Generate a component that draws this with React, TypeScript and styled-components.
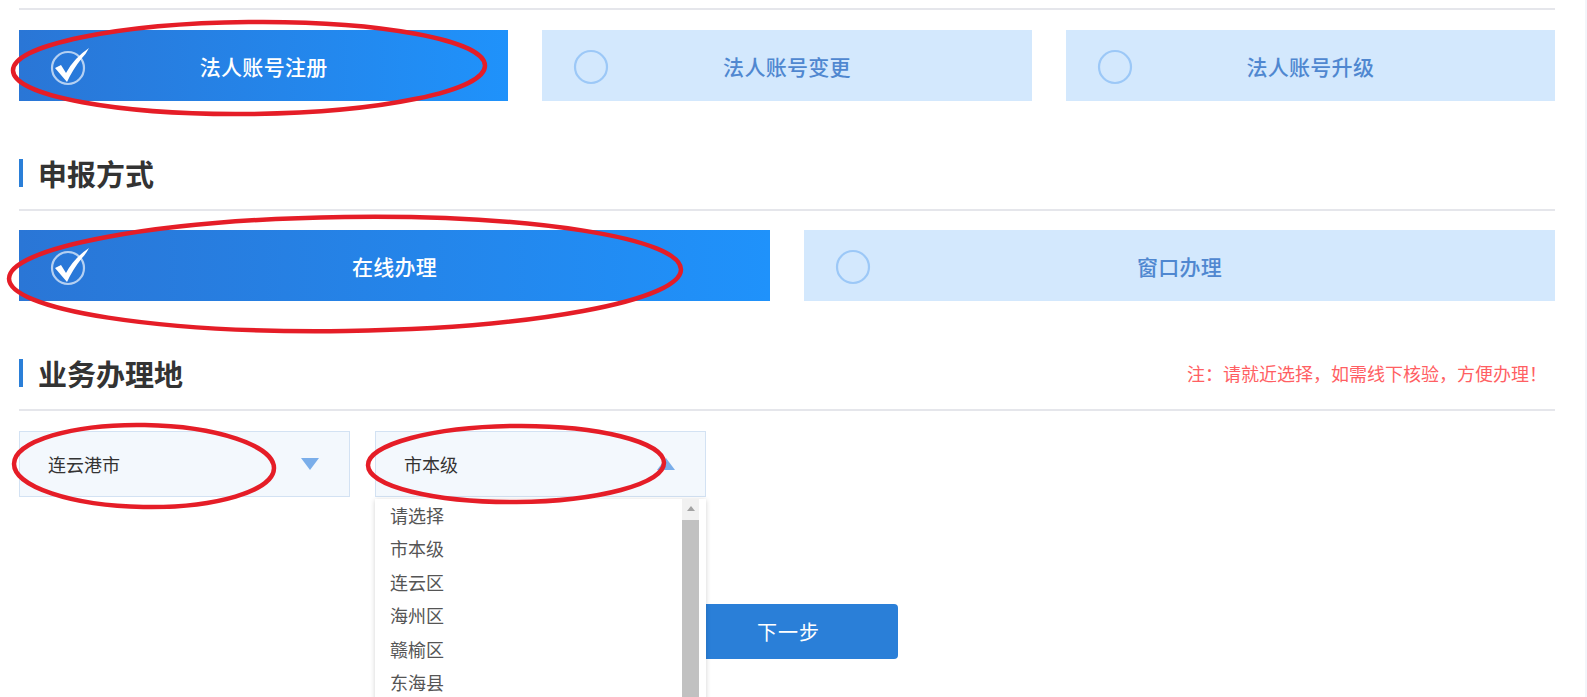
import React from "react";
import styled, { createGlobalStyle } from "styled-components";

const GlobalStyle = createGlobalStyle`
  html, body {
    margin: 0;
    padding: 0;
    background: #ffffff;
    overflow: hidden;
  }
  * {
    box-sizing: border-box;
  }
`;

const FONT = `"Noto Sans CJK SC", "Noto Sans", "Liberation Sans", sans-serif`;

const Page = styled.div`
  position: relative;
  width: 1587px;
  height: 697px;
  overflow: hidden;
  padding: 8px 30px 0 19px;
  font-family: ${FONT};
  border-right: 2px solid #f3f5fa;
`;

const Divider = styled.div<{ $top?: number }>`
  height: 2px;
  background: #e5e6eb;
  margin-top: ${(p) => p.$top ?? 0}px;
`;

const OptionRow = styled.div<{ $cols: number; $top: number }>`
  display: grid;
  grid-template-columns: repeat(${(p) => p.$cols}, 1fr);
  gap: 34px;
  margin-top: ${(p) => p.$top}px;
`;

const OptionCard = styled.div<{ $active?: boolean }>`
  position: relative;
  height: 71px;
  display: flex;
  align-items: center;
  justify-content: center;
  font-size: 21px;
  font-weight: 500;
  letter-spacing: 0.3px;
  color: ${(p) => (p.$active ? "#ffffff" : "#4f87d0")};
  background: ${(p) =>
    p.$active ? "linear-gradient(90deg, #2a76d6 0%, #1f92fb 100%)" : "#d3e8fd"};
`;

const Mark = styled.span`
  position: absolute;
  left: 30px;
  top: 50%;
  transform: translateY(-50%);
  display: flex;
`;

const SectionHead = styled.div<{ $top: number }>`
  display: flex;
  align-items: center;
  justify-content: space-between;
  height: 40px;
  margin-top: ${(p) => p.$top}px;
`;

const SectionTitle = styled.h2`
  display: flex;
  align-items: center;
  gap: 15px;
  margin: 0;
  font-size: 29px;
  font-weight: bold;
  color: #333333;
  &::before {
    content: "";
    width: 4px;
    height: 28px;
    background: #2a7fd8;
  }
`;

const Note = styled.span`
  font-size: 18px;
  color: #ff5f63;
  margin-right: 8px;
`;

const SelectRow = styled.div`
  display: flex;
  gap: 25px;
  margin-top: 20px;
`;

const SelectWrap = styled.div`
  position: relative;
`;

const SelectBox = styled.div`
  width: 331px;
  height: 66px;
  display: flex;
  align-items: center;
  justify-content: space-between;
  padding: 0 30px 0 28px;
  background: #f3f8fd;
  border: 1px solid #d3e2f3;
  font-size: 18px;
  color: #333333;
`;

const Arrow = styled.span<{ $up?: boolean }>`
  width: 0;
  height: 0;
  border-left: 9px solid transparent;
  border-right: 9px solid transparent;
  ${(p) =>
    p.$up
      ? "border-bottom: 12px solid #7aaeea;"
      : "border-top: 12px solid #7aaeea;"}
`;

const DropList = styled.ul`
  position: absolute;
  left: 0;
  top: 68px;
  width: 331px;
  height: 205px;
  margin: 0;
  padding: 0;
  list-style: none;
  background: #ffffff;
  box-shadow: 0 1px 5px rgba(0, 0, 0, 0.18);
  z-index: 5;
  overflow: hidden;
`;

const DropItem = styled.li`
  height: 33.4px;
  line-height: 33px;
  padding-left: 15px;
  font-size: 18px;
  color: #555555;
`;

const ScrollTrack = styled.div`
  position: absolute;
  right: 7px;
  top: 0;
  bottom: 0;
  width: 17px;
  background: #f1f1f1;
  display: flex;
  flex-direction: column;
  align-items: center;
  &::before {
    content: "";
    margin-top: 7px;
    border-left: 4px solid transparent;
    border-right: 4px solid transparent;
    border-bottom: 5px solid #a3a3a3;
  }
  &::after {
    content: "";
    margin-top: 9px;
    width: 17px;
    flex: 1;
    background: #c1c1c1;
  }
`;

const ButtonRow = styled.div`
  margin-top: 107px;
  padding-left: 660px;
`;

const NextButton = styled.button`
  width: 219px;
  height: 55px;
  border: none;
  border-radius: 4px;
  background: #2a7fd8;
  color: #ffffff;
  font-family: ${FONT};
  font-size: 20px;
  letter-spacing: 1px;
  cursor: pointer;
`;

const Annotations = styled.svg`
  position: absolute;
  left: 0;
  top: 0;
  width: 1587px;
  height: 697px;
  pointer-events: none;
  z-index: 10;
`;

const CheckIcon = () => (
  <svg width="46" height="44" viewBox="0 0 46 44">
    <circle cx="19" cy="24" r="16" fill="none" stroke="rgba(255,255,255,0.65)" strokeWidth="2.2" />
    <path
      d="M6 24 L12 21 L17 29 Q25 14 40 4 Q37 10 33 14 Q24 25 18 38 Z"
      fill="#ffffff"
    />
  </svg>
);

const RingIcon = () => (
  <svg width="46" height="44" viewBox="0 0 46 44">
    <circle cx="19" cy="23" r="16" fill="none" stroke="#9cc8f7" strokeWidth="2.2" />
  </svg>
);

const types = [
  { label: "法人账号注册", active: true },
  { label: "法人账号变更", active: false },
  { label: "法人账号升级", active: false },
];

const modes = [
  { label: "在线办理", active: true },
  { label: "窗口办理", active: false },
];

const districts = ["请选择", "市本级", "连云区", "海州区", "赣榆区", "东海县"];

export default function App() {
  return (
    <>
      <GlobalStyle />
      <Page>
        <Divider />
        <OptionRow $cols={3} $top={20}>
          {types.map((t) => (
            <OptionCard key={t.label} $active={t.active}>
              <Mark>{t.active ? <CheckIcon /> : <RingIcon />}</Mark>
              {t.label}
            </OptionCard>
          ))}
        </OptionRow>

        <SectionHead $top={52}>
          <SectionTitle>申报方式</SectionTitle>
        </SectionHead>
        <Divider $top={16} />
        <OptionRow $cols={2} $top={19}>
          {modes.map((m) => (
            <OptionCard key={m.label} $active={m.active}>
              <Mark>{m.active ? <CheckIcon /> : <RingIcon />}</Mark>
              {m.label}
            </OptionCard>
          ))}
        </OptionRow>

        <SectionHead $top={52}>
          <SectionTitle>业务办理地</SectionTitle>
          <Note>注：请就近选择，如需线下核验，方便办理！</Note>
        </SectionHead>
        <Divider $top={16} />

        <SelectRow>
          <SelectWrap>
            <SelectBox>
              连云港市
              <Arrow />
            </SelectBox>
          </SelectWrap>
          <SelectWrap>
            <SelectBox>
              市本级
              <Arrow $up />
            </SelectBox>
            <DropList>
              {districts.map((d) => (
                <DropItem key={d}>{d}</DropItem>
              ))}
              <ScrollTrack />
            </DropList>
          </SelectWrap>
        </SelectRow>

        <ButtonRow>
          <NextButton>下一步</NextButton>
        </ButtonRow>

        <Annotations viewBox="0 0 1587 697">
          <g fill="none" stroke="#e51d27" strokeWidth="4.5">
            <ellipse cx="249" cy="68" rx="236" ry="46" transform="rotate(-0.6 249 68)" />
            <ellipse cx="345" cy="274" rx="336" ry="57" transform="rotate(-0.8 345 274)" />
            <ellipse cx="144" cy="466" rx="130" ry="41" transform="rotate(1 144 466)" />
            <ellipse cx="516" cy="464" rx="148" ry="38" transform="rotate(-0.5 516 464)" />
          </g>
        </Annotations>
      </Page>
    </>
  );
}
